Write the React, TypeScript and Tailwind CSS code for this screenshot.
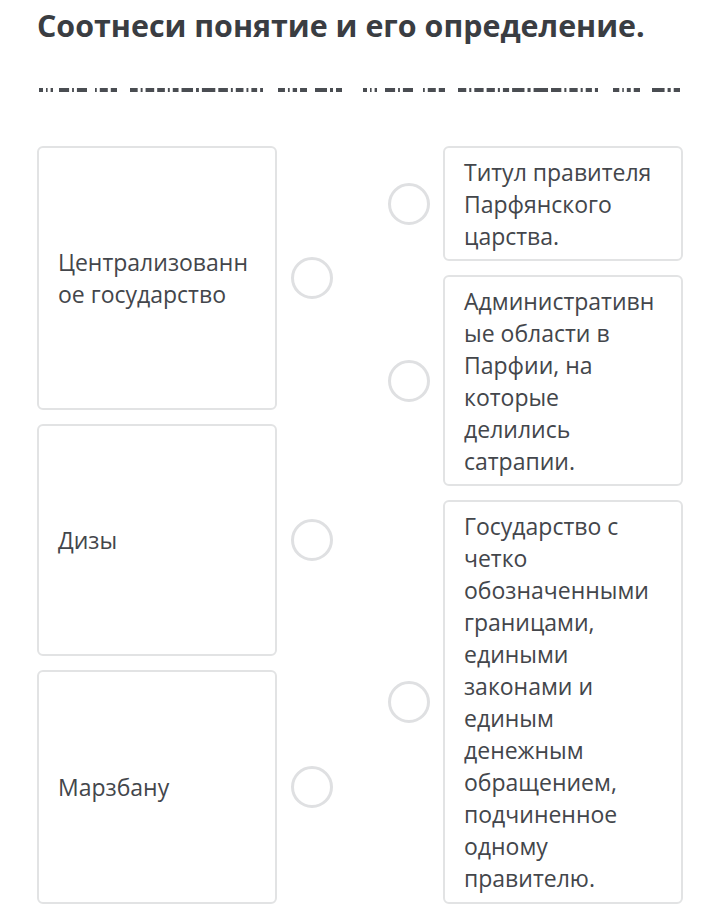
import React from "react";

const groups: [number, number, number[]][] = [
  [39, 53, [5, 2, 3]],
  [59, 87, [11, 2, 11]],
  [95, 117, [2, 9, 7]],
  [130, 263, [8, 2, 9, 8, 2, 6, 12, 3, 14, 10, 2, 8, 2, 6, 3]],
  [278, 307, [8, 2, 5, 8]],
  [315, 342, [12, 3, 6]],
  [363, 377, [5, 2, 3]],
  [385, 413, [11, 2, 11]],
  [423, 445, [2, 9, 7]],
  [458, 598, [8, 2, 9, 8, 2, 6, 12, 3, 14, 10, 2, 8, 2, 6, 3]],
  [613, 640, [8, 2, 5, 8]],
  [652, 680, [12, 3, 6]],
];

function DashLine() {
  const rects: { x: number; w: number }[] = [];
  groups.forEach(([s, e, ws]) => {
    const gap = 3;
    const total = e - s - gap * (ws.length - 1);
    const sum = ws.reduce((a, b) => a + b, 0);
    let x = s;
    ws.forEach((w) => {
      const ww = (w / sum) * total;
      rects.push({ x: x - 37, w: ww });
      x += ww + gap;
    });
  });
  return (
    <svg width="660" height="6" viewBox="0 0 660 6" className="block">
      {rects.map((r, i) => (
        <rect key={i} x={r.x} y={1} width={r.w} height={4} fill="#4a4d52" />
      ))}
    </svg>
  );
}

function Circle() {
  return <div className="w-[42px] h-[42px] shrink-0 rounded-full border-[3px] border-[#dfe0e2]" />;
}

function LeftItem({ text, h }: { text: string; h: string }) {
  return (
    <div className="flex items-center">
      <div
        className={`${h} w-[240px] shrink-0 flex items-center rounded-[6px] border-2 border-[#e2e3e4] bg-white px-[19px] text-[23px] leading-[32px] text-[#43464b]`}
      >
        <div className="w-full min-w-0 break-words">{text}</div>
      </div>
      <div className="ml-[14px]">
        <Circle />
      </div>
    </div>
  );
}

function RightItem({ text, h }: { text: string; h: string }) {
  return (
    <div className="flex items-center">
      <Circle />
      <div
        className={`${h} ml-[13px] w-[240px] shrink-0 flex items-center rounded-[6px] border-2 border-[#e2e3e4] bg-white px-[19px] text-[23px] leading-[32px] text-[#43464b]`}
      >
        <div className="w-full min-w-0 break-words">{text}</div>
      </div>
    </div>
  );
}

export default function App() {
  return (
    <div
      className="w-[705px] h-[907px] overflow-hidden bg-white pl-[37px]"
      style={{ fontFamily: '"Open Sans", "Noto Sans", sans-serif' }}
    >
      <h1 className="pt-[6px] text-[30.4px] leading-[40px] font-bold text-[#3a3d42] whitespace-nowrap">
        Соотнеси понятие и его определение.
      </h1>
      <div className="mt-[41px]">
        <DashLine />
      </div>
      <div className="mt-[53px] flex">
        <div className="w-[351px] flex flex-col gap-[14px]">
          <LeftItem text="Централизованное государство" h="h-[264px]" />
          <LeftItem text="Дизы" h="h-[232px]" />
          <LeftItem text="Марзбану" h="h-[234px]" />
        </div>
        <div className="flex flex-col gap-[14px]">
          <RightItem text="Титул правителя Парфянского царства." h="h-[115px]" />
          <RightItem text="Административные области в Парфии, на которые делились сатрапии." h="h-[211px]" />
          <RightItem
            text="Государство с четко обозначенными границами, едиными законами и единым денежным обращением, подчиненное одному правителю."
            h="h-[404px]"
          />
        </div>
      </div>
    </div>
  );
}
